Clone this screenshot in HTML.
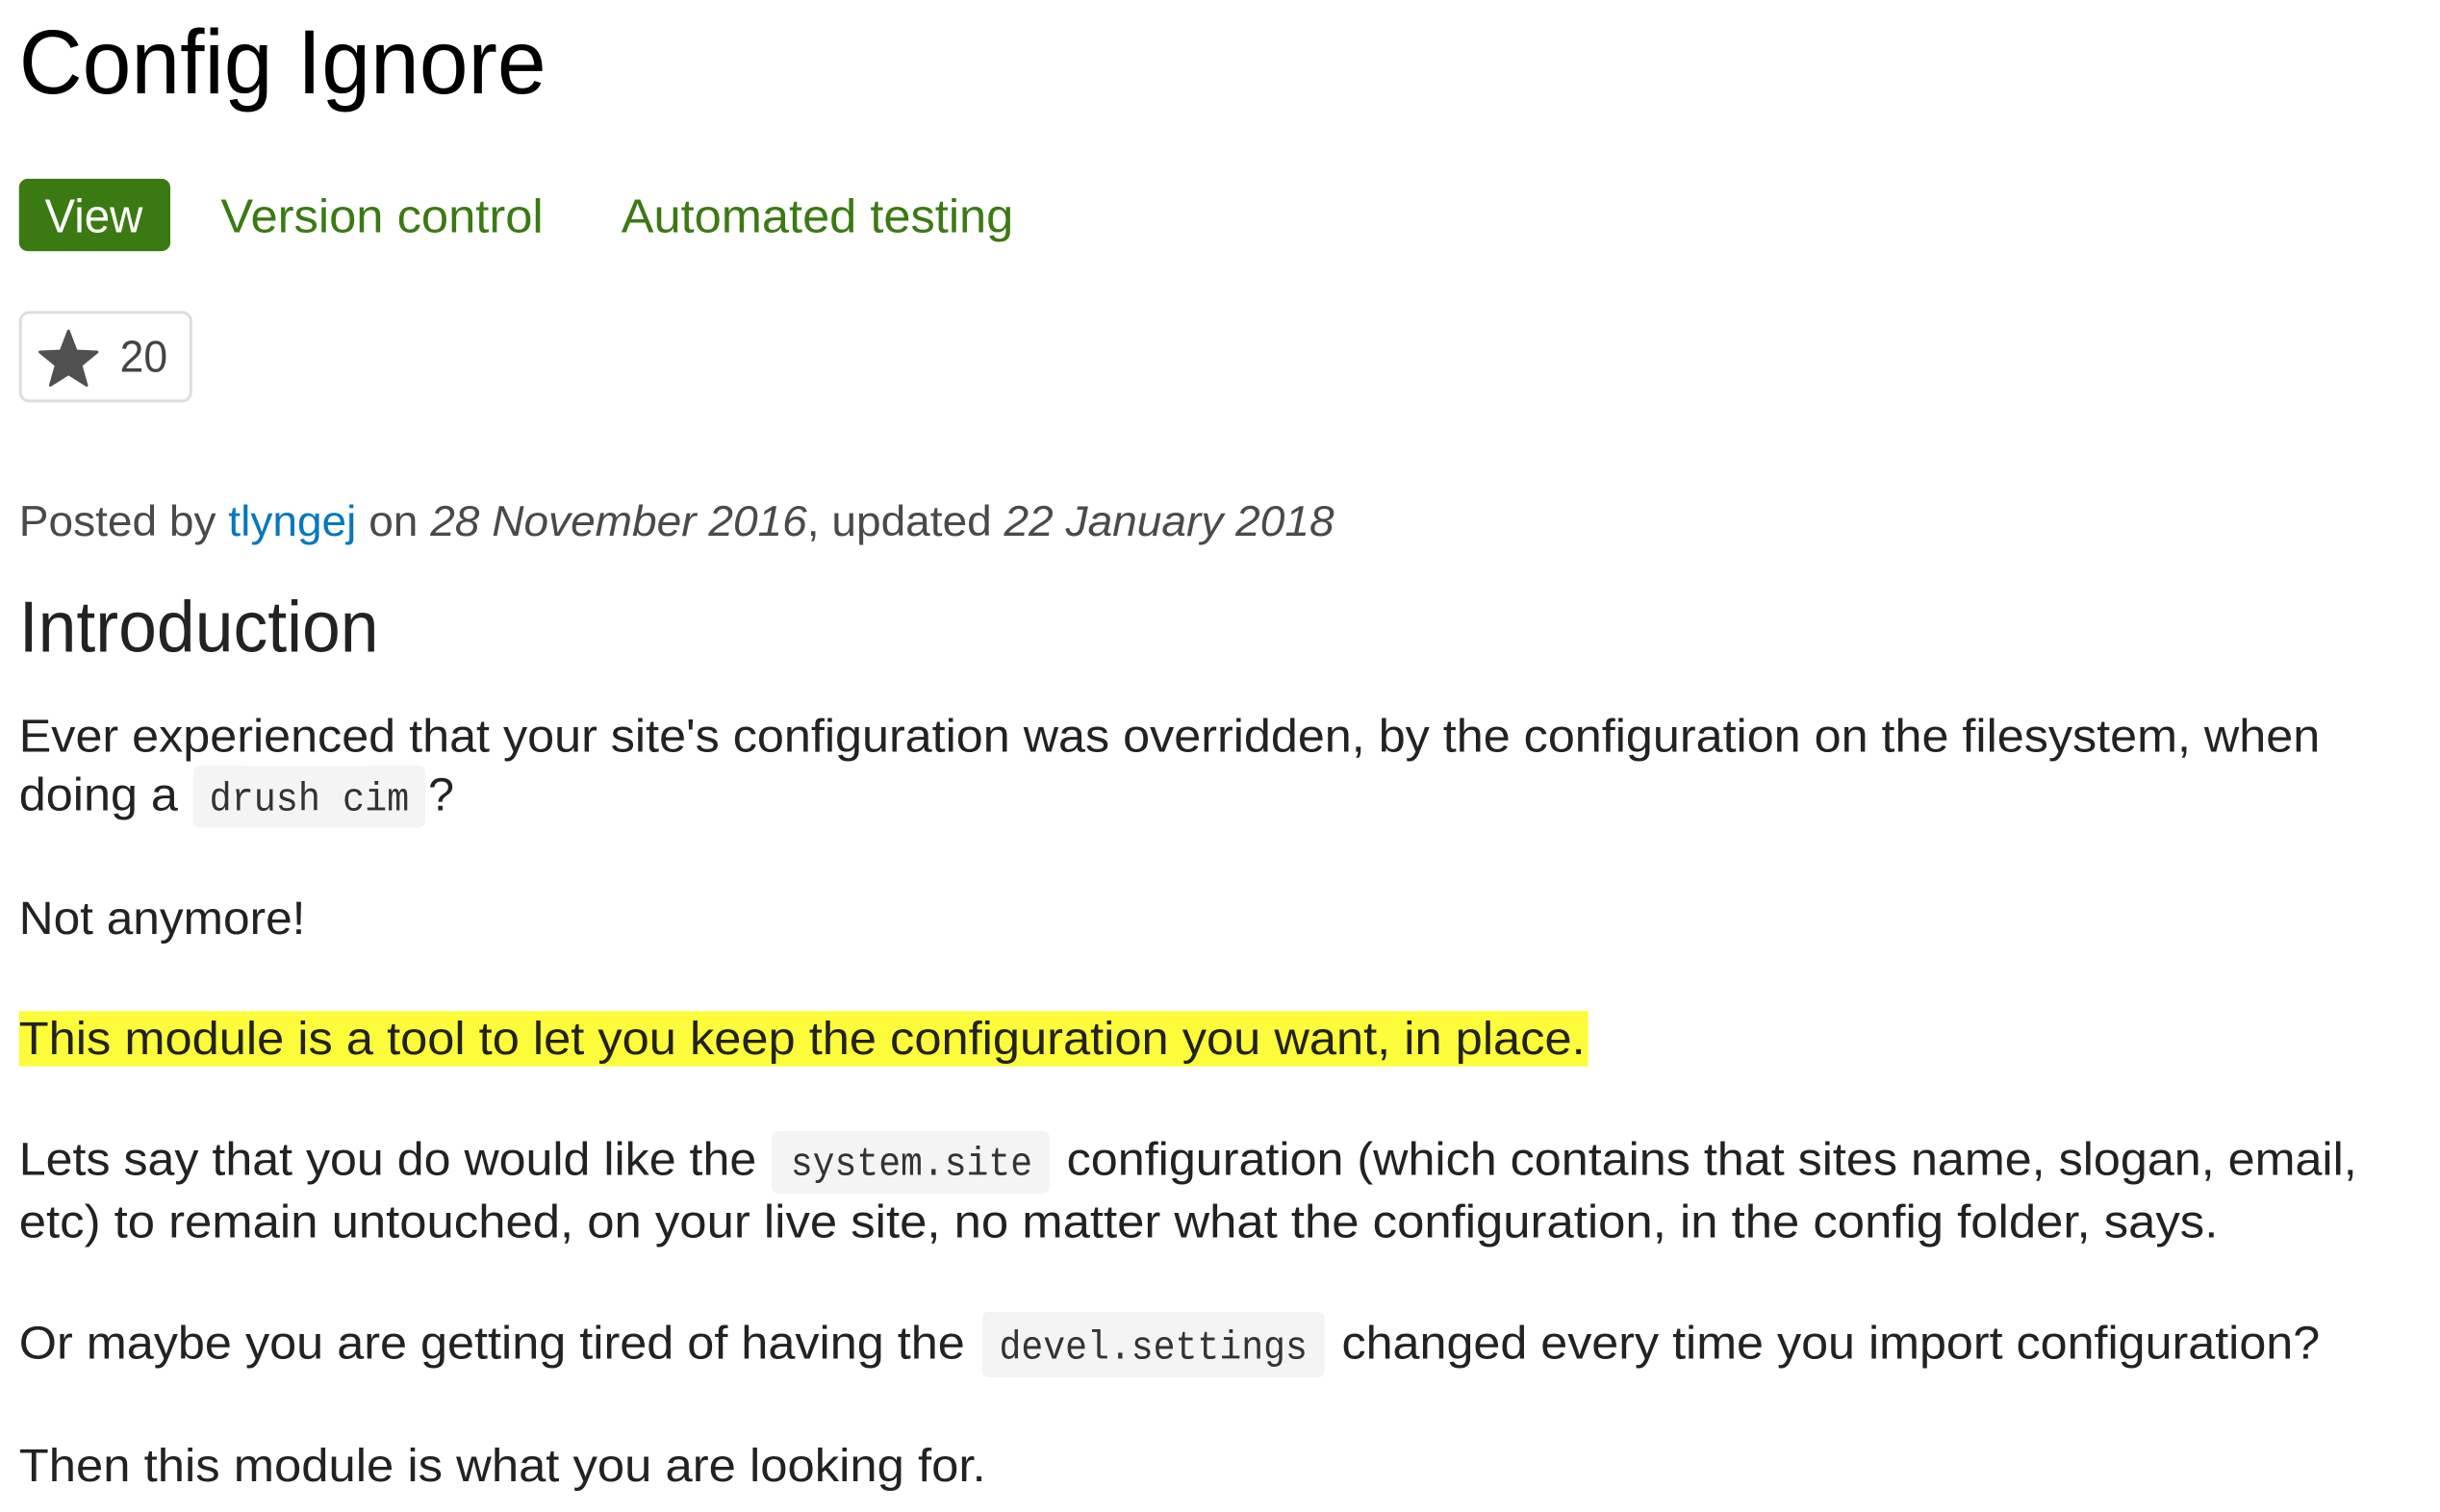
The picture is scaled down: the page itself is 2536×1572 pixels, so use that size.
<!DOCTYPE html>
<html><head><meta charset="utf-8"><style>
html,body{margin:0;padding:0;background:#fff;width:2536px;height:1572px;overflow:hidden}
svg{display:block}
.s{font-family:"Liberation Sans",sans-serif}
.m{font-family:"Liberation Mono",monospace;font-size:42px;fill:#333}
.p{font-size:49px;fill:#222}
</style></head><body>
<svg width="2536" height="1572" viewBox="0 0 2536 1572" xmlns="http://www.w3.org/2000/svg">
<g transform="scale(0.989)">
<text class="s" x="20" y="98" font-size="96" fill="#000" textLength="554" lengthAdjust="spacingAndGlyphs">Config Ignore</text>

<rect x="20" y="188" width="159" height="76" rx="9" fill="#3b7a13"/>
<text class="s" x="47" y="244" font-size="50" fill="#fff" textLength="103" lengthAdjust="spacingAndGlyphs">View</text>
<text class="s" x="232" y="244" font-size="50" fill="#3b7a13" textLength="339" lengthAdjust="spacingAndGlyphs">Version control</text>
<text class="s" x="653" y="244" font-size="50" fill="#3b7a13" textLength="412" lengthAdjust="spacingAndGlyphs">Automated testing</text>

<rect x="21.5" y="328.5" width="179" height="93" rx="9" fill="#fff" stroke="#ddd" stroke-width="3"/>
<path d="M72 348 L80 369 L102 370 L85 384 L91 405 L72 393 L53 405 L59 384 L42 370 L64 369 Z" fill="#505050" stroke="#505050" stroke-width="3" stroke-linejoin="round"/>
<text class="s" x="126" y="391" font-size="47" fill="#444" textLength="50" lengthAdjust="spacingAndGlyphs">20</text>

<text class="s" x="20" y="563" font-size="45" fill="#4a4a4a" textLength="1382" lengthAdjust="spacingAndGlyphs">Posted by <tspan fill="#0678be">tlyngej</tspan> on <tspan font-style="italic">28 November 2016</tspan>, updated <tspan font-style="italic">22 January 2018</tspan></text>

<text class="s" x="20" y="685" font-size="76" fill="#222" textLength="378" lengthAdjust="spacingAndGlyphs">Introduction</text>

<text class="s p" x="20" y="790" textLength="2418" lengthAdjust="spacingAndGlyphs">Ever experienced that your site's configuration was overridden, by the configuration on the filesystem, when</text>
<text class="s p" x="20" y="852" textLength="167" lengthAdjust="spacingAndGlyphs">doing a</text>
<rect x="203" y="805" width="244" height="65" rx="7" fill="#f4f4f4"/>
<text class="m" x="220" y="852" textLength="210" lengthAdjust="spacingAndGlyphs">drush cim</text>
<text class="s p" x="450" y="852">?</text>

<text class="s p" x="20" y="982" textLength="301" lengthAdjust="spacingAndGlyphs">Not anymore!</text>

<rect x="20" y="1063" width="1649" height="58" fill="#fcfc3a"/>
<text class="s p" x="20" y="1108" fill="#111" textLength="1646" lengthAdjust="spacingAndGlyphs">This module is a tool to let you keep the configuration you want, in place.</text>

<text class="s p" x="20" y="1235" textLength="775" lengthAdjust="spacingAndGlyphs">Lets say that you do would like the</text>
<rect x="811" y="1189" width="292" height="66" rx="7" fill="#f4f4f4"/>
<text class="m" x="831" y="1235" textLength="254" lengthAdjust="spacingAndGlyphs">system.site</text>
<text class="s p" x="1121" y="1235" textLength="1356" lengthAdjust="spacingAndGlyphs">configuration (which contains that sites name, slogan, email,</text>
<text class="s p" x="20" y="1301" textLength="2311" lengthAdjust="spacingAndGlyphs">etc) to remain untouched, on your live site, no matter what the configuration, in the config folder, says.</text>

<text class="s p" x="20" y="1428" textLength="994" lengthAdjust="spacingAndGlyphs">Or maybe you are getting tired of having the</text>
<rect x="1032" y="1379" width="360" height="69" rx="7" fill="#f4f4f4"/>
<text class="m" x="1050" y="1428" textLength="324" lengthAdjust="spacingAndGlyphs">devel.settings</text>
<text class="s p" x="1410" y="1428" textLength="1028" lengthAdjust="spacingAndGlyphs">changed every time you import configuration?</text>

<text class="s p" x="20" y="1557" textLength="1016" lengthAdjust="spacingAndGlyphs">Then this module is what you are looking for.</text>
</g>
</svg>
</body></html>
